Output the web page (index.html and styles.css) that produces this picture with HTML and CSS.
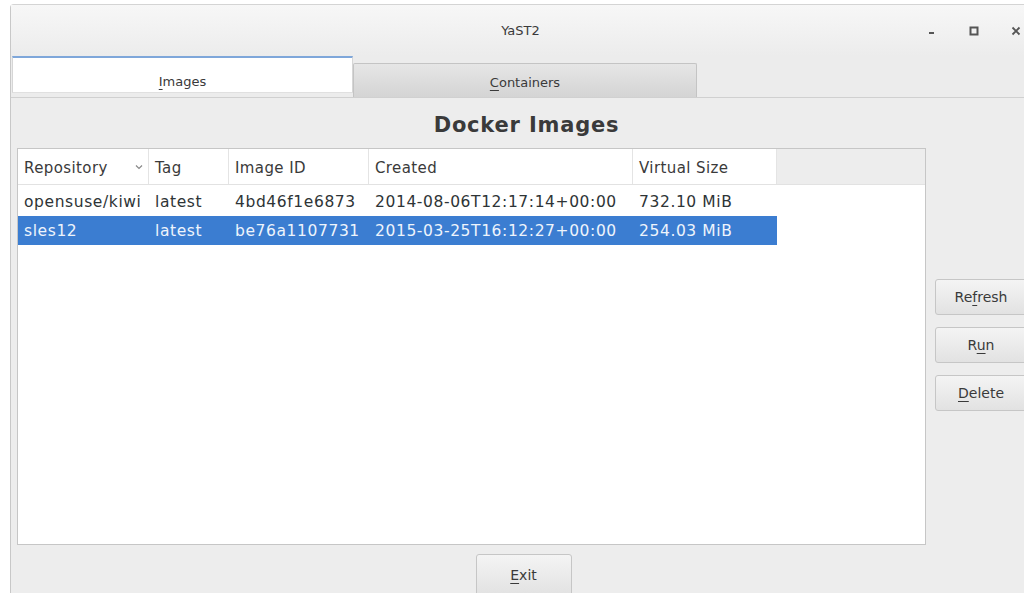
FILE: index.html
```html
<!DOCTYPE html>
<html>
<head>
<meta charset="utf-8">
<title>YaST2</title>
<link rel="stylesheet" href="styles.css">
</head>
<body>
<div class="window">
  <header class="titlebar">
    <span class="title">YaST2</span>
    <div class="controls">
      <svg class="ctl" width="12" height="12" viewBox="0 0 12 12"><rect x="3" y="7" width="5" height="2" fill="#555"/></svg>
      <svg class="ctl" width="12" height="12" viewBox="0 0 12 12"><rect x="2.5" y="2.5" width="7" height="7" fill="none" stroke="#555" stroke-width="2"/></svg>
      <svg class="ctl" width="12" height="12" viewBox="0 0 12 12"><path d="M2.5 2.5 L9.5 9.5 M9.5 2.5 L2.5 9.5" stroke="#555" stroke-width="1.8"/></svg>
    </div>
  </header>

  <nav class="tabbar">
    <div class="tab active"><u>I</u>mages</div>
    <div class="tab"><u>C</u>ontainers</div>
  </nav>

  <main class="panel">
    <h1 class="heading">Docker Images</h1>
    <div class="body">
      <div class="table">
        <div class="row head">
          <div class="cell c-repo">Repository
            <svg class="sort" width="10" height="8" viewBox="0 0 10 8"><path d="M2 2.5 L5 5.5 L8 2.5" fill="none" stroke="#888" stroke-width="1.2"/></svg>
          </div>
          <div class="cell c-tag">Tag</div>
          <div class="cell c-id">Image ID</div>
          <div class="cell c-created">Created</div>
          <div class="cell c-size">Virtual Size</div>
          <div class="cell c-fill"></div>
        </div>
        <div class="row first">
          <div class="cell c-repo">opensuse/kiwi</div>
          <div class="cell c-tag">latest</div>
          <div class="cell c-id">4bd46f1e6873</div>
          <div class="cell c-created">2014-08-06T12:17:14+00:00</div>
          <div class="cell c-size">732.10 MiB</div>
        </div>
        <div class="row selected">
          <div class="cell c-repo">sles12</div>
          <div class="cell c-tag">latest</div>
          <div class="cell c-id">be76a1107731</div>
          <div class="cell c-created">2015-03-25T16:12:27+00:00</div>
          <div class="cell c-size">254.03 MiB</div>
        </div>
      </div>
      <div class="side">
        <button class="btn">Re<u>f</u>resh</button>
        <button class="btn">R<u>u</u>n</button>
        <button class="btn"><u>D</u>elete</button>
      </div>
    </div>
    <footer class="footer">
      <button class="btn exit"><u>E</u>xit</button>
    </footer>
  </main>
</div>
</body>
</html>
```

FILE: styles.css
```css
* { box-sizing: border-box; }

html, body {
  margin: 0;
  padding: 0;
  background: #ffffff;
  overflow: hidden;
  height: 593px;
}

body {
  font-family: "DejaVu Sans", "Liberation Sans", sans-serif;
  color: #2e3436;
}

u {
  text-decoration-thickness: 1px;
  text-underline-offset: 3px;
}

.window {
  margin: 4px 0 0 10px;
  width: 1020px;
  height: 600px;
  display: flex;
  flex-direction: column;
  background: #ededed;
  border-left: 1px solid #c8c8c8;
  border-top: 1px solid #d4d4d4;
  border-radius: 4px 4px 0 0;
}

/* title bar */
.titlebar {
  height: 51px;
  flex: none;
  position: relative;
  display: flex;
  align-items: center;
  justify-content: center;
  background: linear-gradient(#f7f7f7, #ececec);
}

.title {
  font-size: 13px;
  color: #3a3a3a;
}

.controls {
  position: absolute;
  right: 8px;
  top: 20px;
  display: flex;
  gap: 30px;
}

/* notebook tabs */
.tabbar {
  flex: none;
  height: 42px;
  display: flex;
  align-items: flex-end;
  padding-left: 1px;
  border-bottom: 1px solid #d0d0d0;
  background: #ececec;
}

.tab {
  font-size: 13px;
  display: flex;
  align-items: flex-end;
  justify-content: center;
  color: #3a3a3a;
}

.tab.active {
  width: 341px;
  height: 37px;
  margin-bottom: 4px;
  padding-bottom: 3px;
  background: #ffffff;
  border-top: 2px solid #7fa7da;
  border-left: 1px solid #d6d6d6;
  border-right: 1px solid #d6d6d6;
  border-bottom: 1px solid #e0e0e0;
}

.tab:not(.active) {
  width: 344px;
  height: 34px;
  padding-bottom: 7px;
  background: linear-gradient(#e6e6e6, #d4d4d4);
  border: 1px solid #c4c4c4;
  border-bottom: none;
  border-radius: 2px 2px 0 0;
}

/* content */
.panel {
  flex: 1;
  display: flex;
  flex-direction: column;
  padding: 0 0 0 6px;
}

.heading {
  margin: 0;
  height: 50px;
  padding-top: 4px;
  padding-left: 6px;
  display: flex;
  align-items: center;
  justify-content: center;
  font-size: 21px;
  letter-spacing: 0.8px;
  font-weight: bold;
  color: #3a3a3a;
}

.body {
  height: 397px;
  display: flex;
  gap: 9px;
}

.table {
  flex: none;
  width: 909px;
  height: 397px;
  background: #ffffff;
  border: 1px solid #c6c6c6;
  font-size: 15.5px;
  letter-spacing: 0.6px;
}

.row {
  display: flex;
  height: 31px;
  align-items: center;
}

.row.first {
  padding-top: 3px;
}

.row.head {
  height: 36px;
  border-bottom: 1px solid #e2e2e2;
  color: #3a3a3a;
  font-size: 15px;
  letter-spacing: 0.4px;
}

.row.head .cell {
  height: 100%;
  padding-top: 2px;
  display: flex;
  align-items: center;
  border-right: 1px solid #e4e4e4;
}

.row.head .c-fill {
  flex: 1;
  background: #ededed;
  border-right: none;
}

.row.selected {
  height: 29px;
  width: 759px;
  background: #3b7dd1;
  color: #eef4fc;
}

.cell {
  padding-left: 6px;
  white-space: nowrap;
  flex: none;
}

.c-repo { width: 131px; position: relative; }
.c-tag { width: 80px; }
.c-id { width: 140px; }
.c-created { width: 264px; }
.c-size { width: 144px; }

.sort {
  position: absolute;
  right: 4px;
  top: 14px;
}

.side {
  flex: 1;
  display: flex;
  flex-direction: column;
  justify-content: center;
  gap: 12px;
  padding-bottom: 4px;
}

.btn {
  font-family: "DejaVu Sans", "Liberation Sans", sans-serif;
  font-size: 14px;
  color: #3a3a3a;
  height: 36px;
  background: linear-gradient(#f4f4f4, #e2e2e2);
  border: 1px solid #c6c6c6;
  border-radius: 3px;
  padding: 0;
}

.side .btn {
  width: 92px;
}

.footer {
  display: flex;
  justify-content: center;
  padding-top: 9px;
}

.btn.exit {
  width: 96px;
  height: 42px;
}
```
